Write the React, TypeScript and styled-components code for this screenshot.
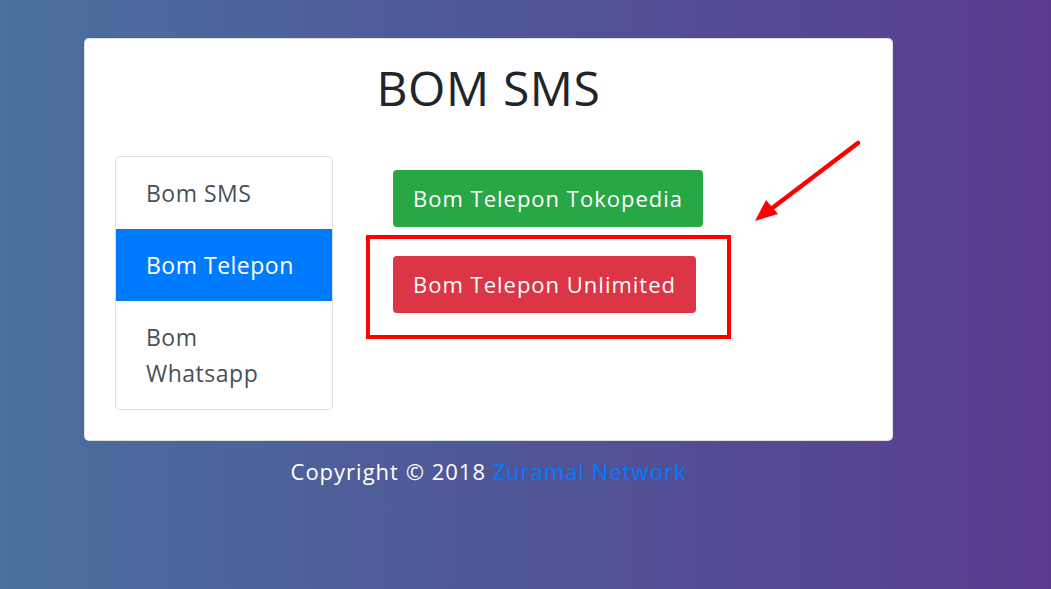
import React from "react";
import styled, { createGlobalStyle } from "styled-components";

const GlobalStyle = createGlobalStyle`
  html, body {
    margin: 0;
    padding: 0;
  }
  body {
    min-height: 589px;
    background: linear-gradient(to right, #4a709e, #505597 50%, #5a3b91);
    font-family: "Open Sans", "Liberation Sans", sans-serif;
  }
`;

const Page = styled.div`
  width: 809px;
  padding: 38px 0 0 84px;
`;

const Card = styled.div`
  background: #fff;
  border: 1px solid rgba(0, 0, 0, 0.125);
  border-radius: 5px;
  padding: 20px 30px 30px;
`;

const Title = styled.h1`
  margin: 0 0 39px;
  text-align: center;
  font-size: 48px;
  font-weight: 400;
  letter-spacing: 0.6px;
  line-height: 1.2;
  color: #212529;
`;

const Row = styled.div`
  display: grid;
  grid-template-columns: 218px 1fr;
  column-gap: 60px;
`;

const ListGroup = styled.div`
  display: flex;
  flex-direction: column;
  border: 1px solid rgba(0, 0, 0, 0.125);
  border-radius: 4px;
  overflow: hidden;
`;

const ListItem = styled.a<{ $active?: boolean }>`
  display: block;
  padding: 18px 30px;
  font-size: 23px;
  letter-spacing: 0.5px;
  line-height: 36px;
  text-decoration: none;
  color: ${(p) => (p.$active ? "#fff" : "#495057")};
  background: ${(p) => (p.$active ? "#007bff" : "#fff")};
`;

const Actions = styled.div`
  position: relative;
  display: flex;
  flex-direction: column;
  align-items: flex-start;
  gap: 29px;
  padding-top: 14px;
`;

const Button = styled.button<{ $variant: "success" | "danger" }>`
  font-family: inherit;
  font-size: 22px;
  letter-spacing: 1px;
  line-height: 33px;
  padding: 11px 19px;
  border: 1px solid transparent;
  border-radius: 4px;
  color: #fff;
  cursor: pointer;
  background: ${(p) => (p.$variant === "success" ? "#28a745" : "#dc3545")};
`;

const Highlight = styled.div`
  position: absolute;
  box-sizing: border-box;
  left: -27px;
  top: 79px;
  width: 365px;
  height: 104px;
  border: 4px solid #ff0000;
  pointer-events: none;
`;

const Arrow = styled.svg`
  position: absolute;
  left: 358px;
  top: -16px;
  overflow: visible;
`;

const Footer = styled.p`
  margin: 14px 0 0;
  text-align: center;
  font-size: 22px;
  letter-spacing: 1px;
  line-height: 32px;
  color: #fff;

  a {
    color: #007bff;
    text-decoration: none;
  }
`;

export default function App() {
  return (
    <>
      <GlobalStyle />
      <Page>
        <Card>
          <Title>BOM SMS</Title>
          <Row>
            <ListGroup>
              <ListItem href="#">Bom SMS</ListItem>
              <ListItem href="#" $active>
                Bom Telepon
              </ListItem>
              <ListItem href="#">Bom Whatsapp</ListItem>
            </ListGroup>
            <Actions>
              <Button $variant="success">Bom Telepon Tokopedia</Button>
              <Button $variant="danger">Bom Telepon Unlimited</Button>
              <Highlight />
              <Arrow width="110" height="90" viewBox="0 0 110 90">
                <line x1="107" y1="3" x2="20" y2="69" stroke="#ff0000" strokeWidth="4.5" strokeLinecap="round" />
                <polygon points="4,81 15,60 27,74" fill="#ff0000" />
              </Arrow>
            </Actions>
          </Row>
        </Card>
        <Footer>
          Copyright © 2018 <a href="#">Zuramai Network</a>
        </Footer>
      </Page>
    </>
  );
}
